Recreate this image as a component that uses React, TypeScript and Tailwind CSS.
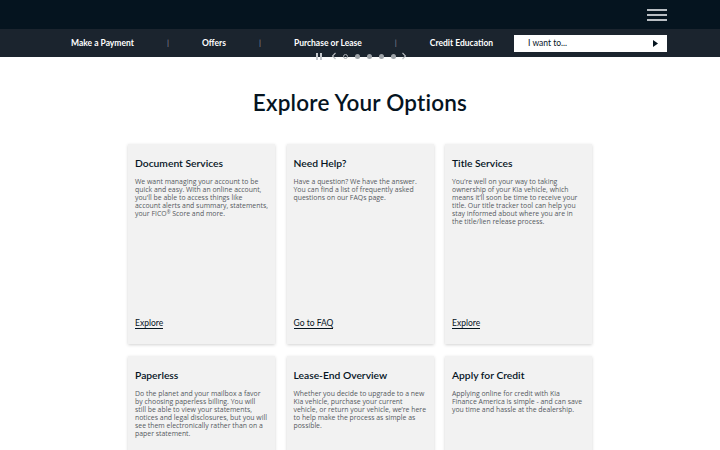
import { ReactNode } from "react";

const NAV = ["Make a Payment", "Offers", "Purchase or Lease", "Credit Education"];

type Card = { title: string; body: ReactNode; link?: string };

const CARDS: Card[] = [
  {
    title: "Document Services",
    body: (
      <>
        We want managing your account to be quick and easy. With an online account, you&apos;ll be able to
        access things like account alerts and summary, statements, your FICO<sup className="text-[4.5px]">®</sup>{" "}
        Score and more.
      </>
    ),
    link: "Explore",
  },
  {
    title: "Need Help?",
    body: "Have a question? We have the answer. You can find a list of frequently asked questions on our FAQs page.",
    link: "Go to FAQ",
  },
  {
    title: "Title Services",
    body: "You’re well on your way to taking ownership of your Kia vehicle, which means it’ll soon be time to receive your title. Our title tracker tool can help you stay informed about where you are in the title/lien release process.",
    link: "Explore",
  },
  {
    title: "Paperless",
    body: "Do the planet and your mailbox a favor by choosing paperless billing. You will still be able to view your statements, notices and legal disclosures, but you will see them electronically rather than on a paper statement.",
  },
  {
    title: "Lease-End Overview",
    body: "Whether you decide to upgrade to a new Kia vehicle, purchase your current vehicle, or return your vehicle, we’re here to help make the process as simple as possible.",
  },
  {
    title: "Apply for Credit",
    body: "Applying online for credit with Kia Finance America is simple - and can save you time and hassle at the dealership.",
  },
];

function CarouselControls() {
  return (
    <div className="absolute left-[316px] top-[51px] flex h-[10px] items-center">
      {/* pause */}
      <div className="flex gap-[2px]">
        <span className="h-[7px] w-[2px] bg-[#c4c8cc]" />
        <span className="h-[7px] w-[2px] bg-[#c4c8cc]" />
      </div>
      <svg width="6" height="8" viewBox="0 0 6 8" className="ml-[9px]">
        <path d="M4.5 1 L1.5 4 L4.5 7" fill="none" stroke="#b8bcc0" strokeWidth="1.1" />
      </svg>
      <div className="ml-[6px] flex gap-[7px]">
        <span className="h-[5px] w-[5px] rounded-full border border-[#a9adb2]" />
        <span className="h-[5px] w-[5px] rounded-full bg-[#9ea3a8]" />
        <span className="h-[5px] w-[5px] rounded-full bg-[#9ea3a8]" />
        <span className="h-[5px] w-[5px] rounded-full bg-[#9ea3a8]" />
        <span className="h-[5px] w-[5px] rounded-full bg-[#9ea3a8]" />
      </div>
      <svg width="6" height="8" viewBox="0 0 6 8" className="ml-[5px]">
        <path d="M1.5 1 L4.5 4 L1.5 7" fill="none" stroke="#b8bcc0" strokeWidth="1.1" />
      </svg>
    </div>
  );
}

export default function App() {
  return (
    <div className="relative h-[450px] w-[720px] overflow-hidden bg-white font-['Lato',sans-serif] text-[#05141f]">
      {/* Top bar */}
      <header className="flex h-[29px] items-center justify-end bg-[#05141f] pr-[53px]">
        <div className="flex flex-col gap-[3px]">
          <span className="h-[2px] w-[20px] bg-[#b9bec3]" />
          <span className="h-[2px] w-[20px] bg-[#b9bec3]" />
          <span className="h-[2px] w-[20px] bg-[#b9bec3]" />
        </div>
      </header>

      {/* Secondary nav */}
      <nav className="flex h-[28px] items-center bg-[#1b242e] pl-[71px]">
        {NAV.map((item, i) => (
          <div key={item} className="flex items-center">
            <span className="text-[8.5px] font-bold text-white">{item}</span>
            {i < NAV.length - 1 ? <span className="mx-[33px] text-[8px] text-[#8a9198]">|</span> : null}
          </div>
        ))}
        <div className="ml-[21px] flex h-[17px] w-[153px] items-center justify-between bg-white pl-[14px] pr-[9px]">
          <span className="text-[8.5px] text-[#05141f]">I want to...</span>
          <svg width="5" height="7" viewBox="0 0 5 7">
            <path d="M0 0 L5 3.5 L0 7 Z" fill="#05141f" />
          </svg>
        </div>
      </nav>
      <CarouselControls />

      <main className="flex flex-col items-center">
        <h1 className="mt-[32px] text-[22.5px] font-semibold leading-[28px] tracking-[0.2px]">Explore Your Options</h1>

        <div className="mt-[27px] grid grid-cols-[147px_147px_147px] gap-x-[11.5px] gap-y-[12px]">
          {CARDS.map((card, i) => (
            <div
              key={card.title}
              className={`flex flex-col bg-[#f2f2f2] px-[7px] pt-[13px] shadow-[0_1px_3px_rgba(0,0,0,0.18)] ${
                i < 3 ? "h-[200px] pb-[15px]" : "h-[120px]"
              }`}
            >
              <h2 className="text-[10.3px] font-semibold leading-[13px]">{card.title}</h2>
              <p className="mt-[8px] font-['Open_Sans',sans-serif] text-[6.9px] leading-[8px] text-[#55595e]">
                {card.body}
              </p>
              {card.link ? (
                <a className="mt-auto self-start border-b border-[#05141f] text-[8.5px] leading-[10px] text-[#05141f]">
                  {card.link}
                </a>
              ) : null}
            </div>
          ))}
        </div>
      </main>
    </div>
  );
}
